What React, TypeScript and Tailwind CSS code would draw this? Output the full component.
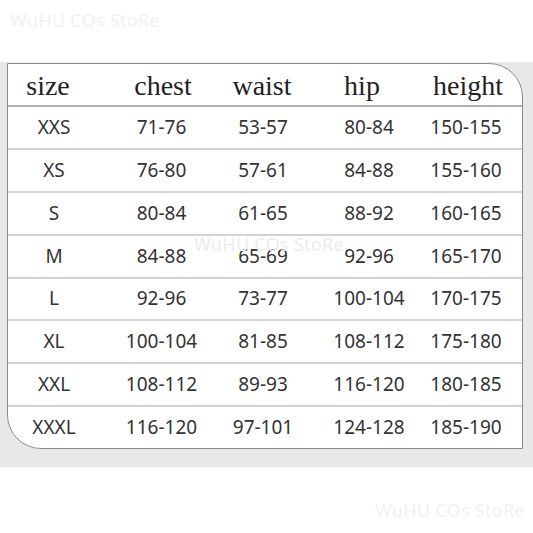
import React from "react";

const rows = [
  ["XXS", "71-76", "53-57", "80-84", "150-155"],
  ["XS", "76-80", "57-61", "84-88", "155-160"],
  ["S", "80-84", "61-65", "88-92", "160-165"],
  ["M", "84-88", "65-69", "92-96", "165-170"],
  ["L", "92-96", "73-77", "100-104", "170-175"],
  ["XL", "100-104", "81-85", "108-112", "175-180"],
  ["XXL", "108-112", "89-93", "116-120", "180-185"],
  ["XXXL", "116-120", "97-101", "124-128", "185-190"],
];

const grid = "grid grid-cols-[92px_123px_80px_126px_76px]";

export default function App() {
  return (
    <div className="w-[533px] h-[533px] bg-white flex flex-col relative overflow-hidden font-['Noto_Sans',sans-serif]">
      <div className="h-[62px] pl-[10px] pt-[8px] text-[18px] leading-[24px] text-[#f1f1f1] tracking-[0.3px]">
        WuHU COs StoRe
      </div>
      <div className="bg-[#e8e8e8] h-[405px] pt-[1px] pl-[7px] pr-[10px]">
        <div className="relative h-[386px] bg-white border border-[#8c8c8c] rounded-tr-[34px] rounded-bl-[34px] overflow-hidden flex flex-col">
          <div className={`${grid} h-[43px] shrink-0 border-b-2 border-[#b0b0b0] items-center pt-[3px] font-['Liberation_Serif',serif] text-[28px] leading-none text-[#222]`}>
            <div className="flex justify-center pr-[12px]">size</div>
            <div className="flex justify-center pl-[3px]">chest</div>
            <div className="flex justify-center pr-[2px]">waist</div>
            <div className="flex justify-center pr-[8px]">hip</div>
            <div className="flex justify-center pl-[2px]">height</div>
          </div>
          {rows.map((r, i) => (
            <div
              key={r[0]}
              className={`${grid} flex-1 items-center text-[19px] leading-none text-[#333] ${
                i < rows.length - 1 ? "border-b-2 border-[#d2d2d2]" : ""
              }`}
            >
              <div className="flex justify-center whitespace-nowrap">{r[0]}</div>
              <div className="flex justify-center whitespace-nowrap">{r[1]}</div>
              <div className="flex justify-center whitespace-nowrap">{r[2]}</div>
              <div className="flex justify-center whitespace-nowrap pl-[6px]">{r[3]}</div>
              <div className="flex justify-center whitespace-nowrap pr-[2px]">{r[4]}</div>
            </div>
          ))}
          <div className="absolute left-[186px] top-[168px] text-[18px] leading-[24px] text-[#ececec] tracking-[0.3px] pointer-events-none">
            WuHU COs StoRe
          </div>
        </div>
      </div>
      <div className="flex-1 flex justify-end pr-[8px] pt-[31px] text-[18px] leading-[24px] text-[#f1f1f1] tracking-[0.3px]">
        WuHU COs StoRe
      </div>
    </div>
  );
}
